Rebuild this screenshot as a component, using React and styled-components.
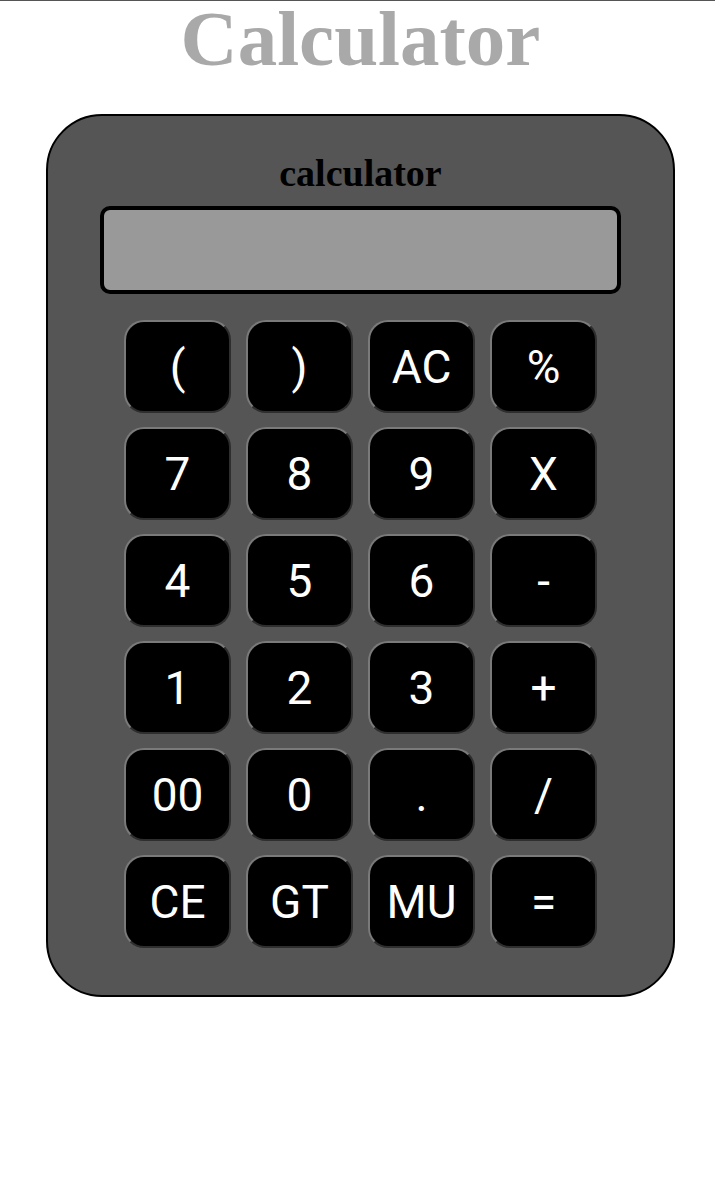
import styled, { createGlobalStyle } from "styled-components";

const Global = createGlobalStyle`
  body {
    margin: 0;
    background: #fff;
    border-top: 1px solid #555;
    font-family: "Liberation Serif", serif;
  }
`;

const Page = styled.div`
  display: flex;
  flex-direction: column;
  align-items: center;
  padding: 0 0 198px 6px;
`;

const Title = styled.h1`
  margin: 0;
  font-family: "Liberation Serif", serif;
  font-size: 79px;
  line-height: 76px;
  font-weight: bold;
  color: #a9a9a9;
`;

const Body = styled.div`
  box-sizing: border-box;
  width: 629px;
  margin-top: 37px;
  padding: 37px 0 47px;
  background: #555555;
  border: 2px solid #000;
  border-radius: 56px;
  display: flex;
  flex-direction: column;
  align-items: center;
`;

const Label = styled.div`
  font-family: "Liberation Serif", serif;
  font-weight: bold;
  font-size: 38px;
  line-height: 40px;
  color: #000;
`;

const Screen = styled.div`
  box-sizing: border-box;
  width: 521px;
  height: 88px;
  margin-top: 13px;
  background: #999999;
  border: 4px solid #000;
  border-radius: 10px;
`;

const Keys = styled.div`
  display: grid;
  grid-template-columns: repeat(4, 107px);
  grid-auto-rows: 93px;
  gap: 14px 15px;
  margin-top: 26px;
`;

const Key = styled.button`
  box-sizing: border-box;
  margin: 0;
  padding: 0;
  background: #000;
  color: #fff;
  font-family: Roboto, "Liberation Sans", sans-serif;
  font-size: 46px;
  border: 2px solid;
  border-color: #7a7a7a #2e2e2e #2e2e2e #7a7a7a;
  border-radius: 20px;
  cursor: pointer;
`;

const keys = [
  "(", ")", "AC", "%",
  "7", "8", "9", "X",
  "4", "5", "6", "-",
  "1", "2", "3", "+",
  "00", "0", ".", "/",
  "CE", "GT", "MU", "=",
];

export default function App() {
  return (
    <>
      <Global />
      <Page>
        <Title>Calculator</Title>
        <Body>
          <Label>calculator</Label>
          <Screen />
          <Keys>
            {keys.map((k) => (
              <Key key={k}>{k}</Key>
            ))}
          </Keys>
        </Body>
      </Page>
    </>
  );
}
